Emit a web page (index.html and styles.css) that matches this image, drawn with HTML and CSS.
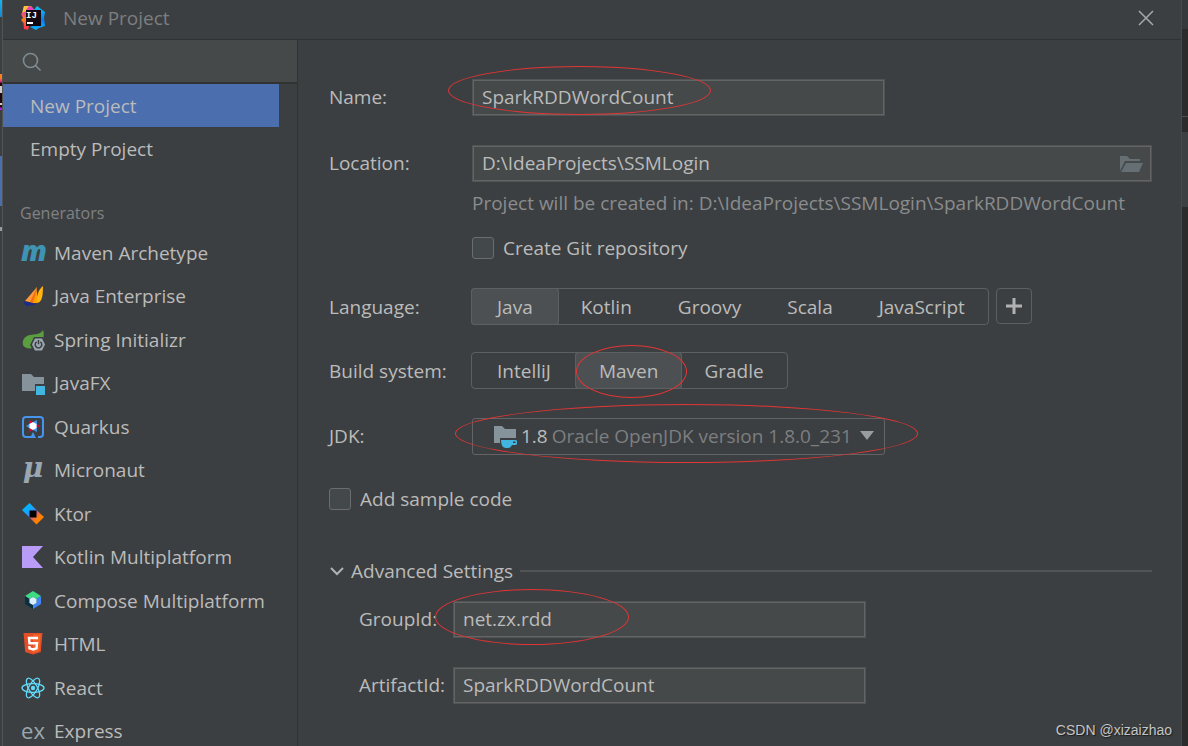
FILE: index.html
```html
<!DOCTYPE html>
<html lang="en">
<head>
<meta charset="utf-8">
<title>New Project</title>
<link rel="stylesheet" href="styles.css">
</head>
<body>
<div class="desktop">
  <div class="edge edge-left" aria-hidden="true">
    <span class="el-cyan"></span><span class="el-logo"></span><span class="el-blue"></span><span class="el-tick"></span>
  </div>
  <div class="dialog" role="dialog" aria-labelledby="dialog-title">
    <header class="titlebar">
      <svg class="app-logo" viewBox="0 0 24 24" aria-hidden="true">
        <defs>
          <linearGradient id="lg1" x1="0" y1="0" x2="0" y2="1"><stop offset="0" stop-color="#ffb02e"/><stop offset=".3" stop-color="#f0468c"/><stop offset=".55" stop-color="#fc801d"/><stop offset="1" stop-color="#fe2857"/></linearGradient>
          <linearGradient id="lg2" x1="0" y1="0" x2="0" y2="1"><stop offset="0" stop-color="#12c4f5"/><stop offset=".6" stop-color="#087cfa"/><stop offset="1" stop-color="#0fb5f5"/></linearGradient>
        </defs>
        <path fill="url(#lg1)" d="M3 0h7l4 5v15l-6 0-1 4-4-1-.5-6L0 14l2-2-2-4 2-2z"/>
        <path fill="#ffc23a" d="M3 0h5L5 5 1 7z"/>
        <path fill="#e743c0" d="M8 0l3 1 2 3H5z"/>
        <path fill="url(#lg2)" d="M13 4l3-4 4 3 4 3-1 6 1 8-6 2-3 2-6-3 8-3z"/>
        <path fill="#120a10" d="M5 4h15v16H5z"/>
        <path fill="#fff" d="M6 16h6v2H6z"/>
        <text class="logo-text" x="5" y="12">IJ</text>
      </svg>
      <h1 id="dialog-title" class="title">New Project</h1>
      <button class="close" type="button" aria-label="Close"><svg viewBox="0 0 16 16"><path d="M1 1l14 14M15 1L1 15"/></svg></button>
    </header>
    <div class="body">
      <aside class="sidebar">
        <div class="search">
          <svg viewBox="0 0 20 20" aria-hidden="true"><circle cx="8.500" cy="8.500" r="7"/><path d="M13.500 13.500l5 5"/></svg>
          <input type="text" aria-label="Search">
        </div>
        <nav>
          <button type="button" class="item selected">New Project</button>
          <button type="button" class="item">Empty Project</button>
          <h2 class="group">Generators</h2>
          <div class="generators">
            <button type="button" class="gen"><span class="glyph maven">m</span>Maven Archetype</button>
            <button type="button" class="gen"><svg class="icon" viewBox="0 0 24 24"><path fill="#ff9a3c" d="M16 3L4 17l9 2z"/><path fill="#f56e10" d="M16 3l-7 15 4 1z"/><path fill="#ffb414" d="M22 2c-4 3-6 8-7 17 5 0 7-4 7-17z"/><path fill="#ffa000" d="M16 5v14h-4z"/><path fill="#1b2a8c" d="M2 17l13 3-2 1-8 1z"/></svg>Java Enterprise</button>
            <button type="button" class="gen"><svg class="icon" viewBox="0 0 24 24"><path fill="#5a9e40" d="M22 2c-3 5-8 4-13 5-6 1-8 6-7 10 1 3 6 4 10 3l3-9h7c1-3 1-6 0-9z"/><path fill="#3c3f41" d="M13 9h9l3 6-3 9h-9l-4-7z"/><path fill="#9aa7b0" d="M14 10.500h7l3 6-3 6h-7l-3-6z"/><path fill="none" stroke="#3c3f41" stroke-width="1.500" d="M15.600 13.900a3.300 3.300 0 1 0 3.800 0M17.500 12v4.300"/></svg>Spring Initializr</button>
            <button type="button" class="gen"><svg class="icon" viewBox="0 0 24 24"><path fill="#87939a" d="M1 3h9l3 3h10v7h-9v7H1z"/><path fill="#40b6e0" d="M15 15h9v9h-9z"/></svg>JavaFX</button>
            <button type="button" class="gen"><svg class="icon" viewBox="0 0 24 24"><path fill="none" stroke="#4695eb" stroke-width="2" d="M17 22h2a3 3 0 0 0 3-3V5a3 3 0 0 0-3-3H5a3 3 0 0 0-3 3v14a3 3 0 0 0 3 3h6"/><path fill="#4695eb" d="M12 17l3 6h-6z"/><path fill="#e5003c" d="M8 5l4 2-4 4zM19 11l-5 3v-6zM8 17v-6l4 4z"/><path fill="#4695eb" d="M16 5v6l-4-4zM5 11l5-3v6zM16 17l-4-2 4-4z"/><path fill="#fff" d="M12 7l3.500 2v4L12 15l-3.500-2V9z"/></svg>Quarkus</button>
            <button type="button" class="gen"><span class="glyph mu">μ</span>Micronaut</button>
            <button type="button" class="gen"><svg class="icon" viewBox="0 0 24 24"><defs><linearGradient id="k1" x1="0" y1="0" x2="1" y2="1"><stop offset=".4" stop-color="#07b0ff"/><stop offset="1" stop-color="#8a55e8"/></linearGradient><linearGradient id="k2" x1="0" y1="0" x2="1" y2="1"><stop offset=".1" stop-color="#b44ad0"/><stop offset=".6" stop-color="#ff8100"/></linearGradient></defs><path fill="url(#k1)" d="M8.500 1L16 8.500v7H8.500L1 8z"/><path fill="url(#k2)" d="M16 8.500L23 15l-7.500 7.500-7-7z"/><path d="M8.500 8.500h7v7h-7z"/></svg>Ktor</button>
            <button type="button" class="gen"><svg class="icon" viewBox="0 0 24 24"><path fill="#b99bf8" d="M1 1h21L12 12l10 11H1z"/></svg>Kotlin Multiplatform</button>
            <button type="button" class="gen"><svg class="icon" viewBox="0 0 24 24"><path fill="#3ddc84" d="M12 2l8 5-4.500 3L12 8l-3.500 2L4 7z"/><path fill="#083042" d="M4 7l4.500 3v4l3.500 2v4l-8-5z"/><path fill="#4285f4" d="M20 7v8l-8 5v-4l3.500-2v-4z"/><path fill="#d7effe" d="M12 8l3.500 2v4L12 16l-3.500-2v-4z"/></svg>Compose Multiplatform</button>
            <button type="button" class="gen"><svg class="icon" viewBox="0 0 24 24"><path fill="#e44d26" d="M2.500 1h19l-1.700 19L12 22.500 4.200 20z"/><path fill="#f16529" d="M12 2.500h7.800l-1.500 16.300L12 20.700z"/><path fill="none" stroke="#fff" stroke-width="2.400" d="M17 6H8l.5 5.200H16l-.5 5.100L12 17.400l-3.500-1.100-.2-2.300"/></svg>HTML</button>
            <button type="button" class="gen"><svg class="icon react" viewBox="0 0 24 24"><g fill="none" stroke="#61dafb" stroke-width="1.300"><ellipse cx="12" cy="12" rx="11" ry="4.300"/><ellipse cx="12" cy="12" rx="11" ry="4.300" transform="rotate(60 12 12)"/><ellipse cx="12" cy="12" rx="11" ry="4.300" transform="rotate(120 12 12)"/></g><circle cx="12" cy="12" r="2.200" fill="#61dafb"/></svg>React</button>
            <button type="button" class="gen"><span class="glyph ex">ex</span>Express</button>
          </div>
        </nav>
      </aside>
      <main class="form">
        <div class="row">
          <label for="name">Name:</label>
          <div class="field medium"><input id="name" class="text" type="text" value="SparkRDDWordCount"><span class="mark mark-name"></span></div>
        </div>
        <div class="row gap-29">
          <label for="location">Location:</label>
          <div class="field text with-icon"><input id="location" type="text" value="D:\IdeaProjects\SSMLogin"><button type="button" class="browse" aria-label="Browse"><svg viewBox="0 0 24 18"><path d="M1 16V1h7l3 3h10v2H6z"/><path d="M7 8h17l-4 9H2z"/></svg></button></div>
        </div>
        <p class="hint indent">Project will be created in: D:\IdeaProjects\SSMLogin\SparkRDDWordCount</p>
        <label class="check indent git"><input type="checkbox">Create Git repository</label>
        <div class="row choice">
          <span class="label">Language:</span>
          <div class="segments" role="group" aria-label="Language">
            <button type="button" class="on">Java</button><button type="button">Kotlin</button><button type="button">Groovy</button><button type="button">Scala</button><button type="button">JavaScript</button>
          </div>
          <button type="button" class="add" aria-label="Add language"><svg viewBox="0 0 16 16"><path d="M8 0v16M0 8h16"/></svg></button>
        </div>
        <div class="row choice build">
          <span class="label">Build system:</span>
          <div class="segments" role="group" aria-label="Build system">
            <button type="button">IntelliJ</button><button type="button" class="on">Maven<span class="mark mark-maven"></span></button><button type="button">Gradle</button>
          </div>
        </div>
        <div class="row gap-29">
          <label for="jdk">JDK:</label>
          <div class="field medium combo">
            <svg class="jdk-icon" viewBox="0 0 24 24" aria-hidden="true"><path fill="#87939a" d="M1 2h8l3 3h11v9H7v5H1z"/><path fill="#40b6e0" d="M8 16h14a2.500 2.500 0 0 1 0 5h-3c-1 2-2 3-4 3h-2c-3 0-5-3-5-8z"/><path fill="#3c3f41" d="M20 17.500h2.500v1.500h-2.500z"/></svg>
            <span>1.8</span>
            <select id="jdk"><option>Oracle OpenJDK version 1.8.0_231</option></select>
            <svg class="arrow" viewBox="0 0 14 9" aria-hidden="true"><path d="M0 0h14L7 9z"/></svg>
            <span class="mark mark-jdk"></span>
          </div>
        </div>
        <label class="check sample"><input type="checkbox">Add sample code</label>
        <button type="button" class="advanced" aria-expanded="true"><svg viewBox="0 0 14 9"><path d="M1 1l6 6 6-6"/></svg>Advanced Settings<span class="rule"></span></button>
        <div class="row sub group-id">
          <label for="group">GroupId:</label>
          <div class="field medium"><input id="group" class="text" type="text" value="net.zx.rdd"><span class="mark mark-group"></span></div>
        </div>
        <div class="row sub gap-29">
          <label for="artifact">ArtifactId:</label>
          <div class="field medium"><input id="artifact" class="text" type="text" value="SparkRDDWordCount"></div>
        </div>
      </main>
    </div>
  </div>
  <div class="edge edge-right" aria-hidden="true"><span class="er-top"></span><span class="er-line"></span><span class="er-thumb"></span></div>
  <div class="watermark">CSDN @xizaizhao</div>
</div>
</body>
</html>
```
FILE: styles.css
```css
* { box-sizing: border-box; }
body {
  margin: 0;
  overflow: hidden;
  background: #2b2b2b;
  color: #bbbbbb;
  font: 19px/24px "Open Sans", "Noto Sans", sans-serif;
}
button, input, select { font: inherit; color: inherit; background: none; border: 0; padding: 0; margin: 0; outline: 0; }
svg { display: block; flex: none; }
h1, h2, p { margin: 0; font-weight: 400; }

.desktop { position: relative; display: grid; grid-template-columns: 3px minmax(0, 1fr) 7px; height: 100vh; }
.edge { display: flex; flex-direction: column; }
.edge span { flex: none; }
.edge-left { background: #3c3f41; border-right: 1px solid #515354; }
.el-cyan { height: 17px; background: linear-gradient(#12b4f0, #1689d8); }
.el-logo { height: 36px; margin-top: 57px; background: linear-gradient(#fc801d 0 4px, #e0218a 8px, #21060f 9px 12px, #ccc 12px 19px, #21060f 19px 29px, #ccc 29px 31px, #21060f 31px 33px, #b01be0 34px); }
.el-blue { height: 50px; margin-top: 46px; background: #4b6eaf; }
.el-tick { height: 4px; margin-top: 21px; background: #9a9c9d; }
.edge-right { background: #2b2b2b; border-left: 1px solid #46494b; }
.er-top { height: 29px; background: #35393c; }
.er-line { height: 1px; margin-top: 87px; background: #4b4d4f; }
.er-thumb { height: 75px; margin-top: 15px; background: #3d4042; }

.dialog { display: flex; flex-direction: column; min-height: 0; background: #3c3f41; }
.titlebar { display: flex; align-items: center; flex: none; height: 40px; padding: 0 27px 3px 18px; border-bottom: 1px solid #2f3234; }
.app-logo { width: 24px; height: 24px; }
.logo-text { fill: #fff; font: bold 9px "Liberation Mono", monospace; }
.title { flex: 1; margin-left: 18px; color: #7c7e80; font-size: 19px; }
.close svg { width: 16px; height: 16px; fill: none; stroke: #a6a8a9; stroke-width: 1.5; }
.body { display: grid; grid-template-columns: 295px minmax(0, 1fr); flex: 1; min-height: 0; }

.sidebar { border-right: 1px solid #303234; overflow: hidden; }
.search { display: flex; align-items: center; height: 44px; padding: 2px 19px 0; border-bottom: 2px solid #323232; background: #45494a; }
.search svg { width: 20px; height: 20px; fill: none; stroke: #7f8b91; stroke-width: 1.600; }
.search input { flex: 1; min-width: 0; padding-left: 8px; }
.item { display: block; width: 276px; height: 43px; padding-left: 27px; text-align: left; }
.selected { background: #4b6eaf; }
.group { padding: 31px 0 6px 17px; color: #808284; font-size: 16px; }
.generators { display: grid; grid-template-rows: repeat(12, 1fr); height: 522px; }
.gen { display: flex; align-items: center; gap: 9px; padding-left: 18px; text-align: left; }
.icon { width: 24px; height: 24px; }
.glyph { width: 24px; text-align: center; line-height: 24px; color: #9aa7b0; }
.maven { padding-bottom: 6px; color: #3f93b3; font: italic 800 28px/20px "Open Sans", sans-serif; }
.mu { padding-bottom: 4px; font: italic bold 28px/24px "DejaVu Serif", serif; }
.ex { padding-bottom: 2px; font-size: 22px; }

.form { display: flex; flex-direction: column; min-width: 0; padding: 39px 29px 0 31px; overflow: hidden; }
.row { display: grid; grid-template-columns: 143px minmax(0, 1fr); align-items: center; flex: none; }
.row > label { padding-bottom: 2px; }
.gap-29 { margin-top: 29px; }
.field { position: relative; height: 37px; }
.medium { width: 413px; max-width: 100%; }
.text { border: 1px solid #515355; outline: 1px solid #646464; outline-offset: -2px; background: #45494a; }
input.text { width: 100%; height: 37px; padding: 0 9px 2px; }
.with-icon { display: flex; align-items: center; padding: 0 8px 0 9px; }
.with-icon input { flex: 1; min-width: 0; padding-bottom: 2px; }
.browse svg { width: 24px; height: 18px; fill: #656f74; }
.indent { margin-left: 143px; }
.hint { margin-top: 9px; color: #8a8c8d; white-space: nowrap; }
.check { display: flex; align-items: center; gap: 9px; flex: none; }
.check input { appearance: none; width: 22px; height: 22px; border: 1px solid #6b6d6d; border-radius: 3px; background: #43494a; }
.git { margin-top: 21px; }
.choice { display: flex; margin-top: 28px; }
.build { margin-top: 27px; }
.label { width: 142px; }
.segments { display: flex; height: 37px; border: 1px solid #5e6060; border-radius: 4px; }
.segments button { position: relative; padding: 0 23px; }
.segments button:first-child { padding: 0 25px; }
.segments .on { background: #4c5052; box-shadow: 0 0 0 1px #5e6060; border-radius: 3px; }
.add { display: grid; place-items: center; align-self: flex-start; width: 36px; height: 36px; margin-left: 7px; border: 1px solid #5e6060; border-radius: 4px; }
.add svg { width: 16px; height: 16px; stroke: #afb1b3; stroke-width: 3; }
.combo { display: flex; align-items: center; gap: 4px; padding: 0 10px 2px 20px; border: 1px solid #646464; border-radius: 3px; }
.jdk-icon { width: 24px; height: 24px; }
.combo select { flex: 1; min-width: 0; appearance: none; color: #7c7e80; }
.arrow { width: 14px; height: 9px; fill: #9a9da0; }
.sample { margin-top: 32px; }
.advanced { display: flex; align-items: center; flex: none; gap: 7px; margin-top: 48px; padding-left: 1px; }
.advanced svg { width: 14px; height: 9px; fill: none; stroke: #afb1b3; stroke-width: 2; }
.rule { flex: 1; height: 2px; background: #515355; }
.sub { grid-template-columns: 94px minmax(0, 1fr); padding-left: 30px; }
.group-id { margin-top: 18px; }

.mark { position: absolute; border: 1px solid #e23535; border-radius: 50%; pointer-events: none; }
.mark-name { left: -24px; top: -13px; width: 263px; height: 49px; }
.mark-maven { left: 0; top: -8px; width: 111px; height: 53px; }
.mark-jdk { left: -18px; top: -15px; width: 463px; height: 59px; }
.mark-group { left: -18px; top: -12px; width: 194px; height: 56px; }
.watermark { position: absolute; right: 16px; bottom: 6px; color: #c4c5c6; font: 14px/20px "Liberation Sans", Arial, sans-serif; text-shadow: 1px 1px 1px #1c1c1c; }
```
